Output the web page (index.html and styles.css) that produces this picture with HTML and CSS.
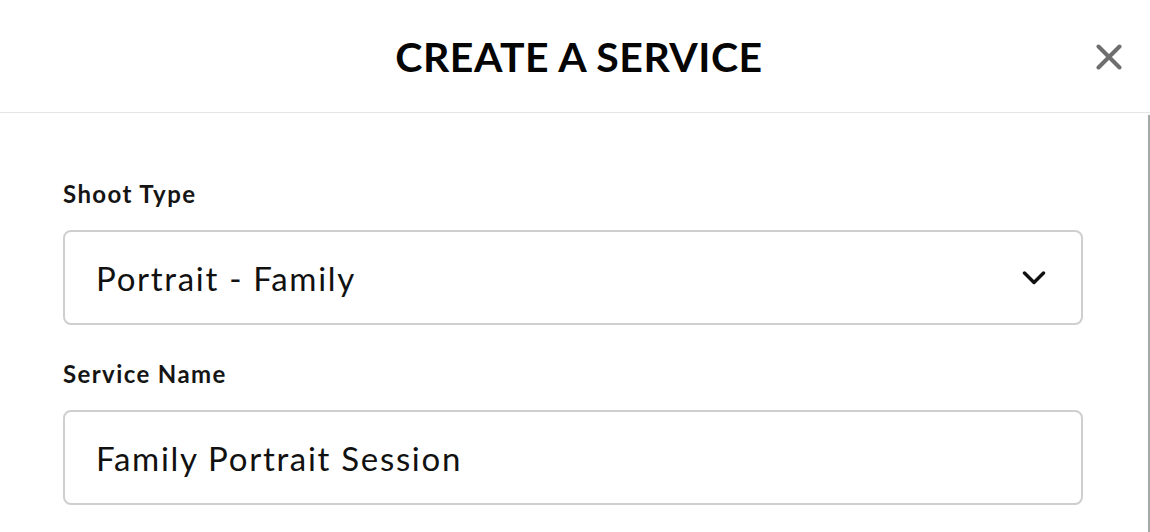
FILE: index.html
```html
<!DOCTYPE html>
<html lang="en">
<head>
    <meta charset="UTF-8">
    <meta name="viewport" content="width=device-width, initial-scale=1.0">
    <title>Create a Service</title>
    <link rel="stylesheet" href="styles.css">
</head>
<body>
    <div class="modal">
        <header class="modal-header">
            <h1 class="modal-title">CREATE A SERVICE</h1>
            <button class="close-btn" aria-label="Close">
                <svg width="26" height="26" viewBox="0 0 26 26">
                    <path d="M2.5 2.5 L23.5 23.5 M23.5 2.5 L2.5 23.5" stroke="#6e6e6e" stroke-width="4" stroke-linecap="round" fill="none"/>
                </svg>
            </button>
        </header>

        <div class="modal-body">
            <form class="service-form">
                <div class="field">
                    <label class="field-label">Shoot Type</label>
                    <div class="field-box select-box">
                        <span class="field-value">Portrait - Family</span>
                        <svg class="chevron" width="24" height="14" viewBox="0 0 24 14">
                            <path d="M2.5 2 L12 11.5 L21.5 2" stroke="#111" stroke-width="3.4" stroke-linecap="round" stroke-linejoin="round" fill="none"/>
                        </svg>
                    </div>
                </div>

                <div class="field">
                    <label class="field-label">Service Name</label>
                    <div class="field-box">
                        <span class="field-value">Family Portrait Session</span>
                    </div>
                </div>
            </form>
            <div class="scroll-thumb"></div>
        </div>
    </div>
</body>
</html>
```

FILE: styles.css
```css
:root {
    --text-color: #111111;
    --border-color: #cfcfcf;
    --divider-color: #e6e6e6;
    --scroll-color: #a8a8a8;
}

* {
    margin: 0;
    padding: 0;
    box-sizing: border-box;
}

body {
    background-color: #ffffff;
    color: var(--text-color);
    font-family: Lato, 'Noto Sans', Arial, sans-serif;
    height: 100vh;
    overflow: hidden;
}

.modal {
    display: flex;
    flex-direction: column;
    height: 100%;
}

.modal-header {
    display: grid;
    grid-template-columns: 1fr auto 1fr;
    align-items: center;
    height: 113px;
    border-bottom: 1px solid var(--divider-color);
}

.modal-title {
    grid-column: 2;
    font-size: 41px;
    font-weight: 700;
    letter-spacing: 0.5px;
    color: #050505;
    margin-top: 1px;
    margin-left: 8px;
}

.close-btn {
    grid-column: 3;
    justify-self: end;
    margin-right: 28px;
    background: none;
    border: none;
    display: flex;
    margin-top: 1px;
}

.modal-body {
    flex-grow: 1;
    display: flex;
}

.service-form {
    flex-grow: 1;
    padding: 66px 65px 0 63px;
    display: flex;
    flex-direction: column;
    gap: 34px;
}

.field {
    display: flex;
    flex-direction: column;
    gap: 22px;
}

.field-label {
    font-size: 24px;
    font-weight: 700;
    line-height: 29px;
    letter-spacing: 1.4px;
    color: #151515;
}

.field-box {
    height: 95px;
    border: 2px solid var(--border-color);
    border-radius: 8px;
    display: flex;
    align-items: center;
    padding: 0 35px 0 31px;
}

.field-value {
    font-size: 33px;
    letter-spacing: 1.7px;
    color: var(--text-color);
    flex-grow: 1;
}

.chevron {
    flex-shrink: 0;
}

.scroll-thumb {
    width: 2px;
    margin-top: 2px;
    background-color: var(--scroll-color);
}
```
